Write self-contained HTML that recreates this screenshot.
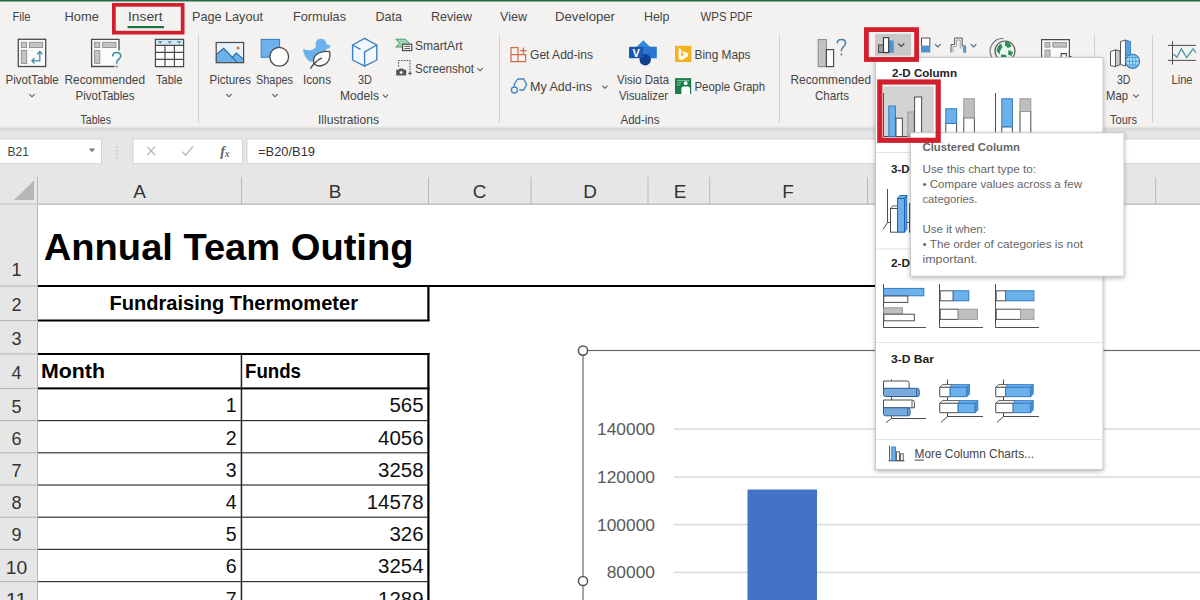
<!DOCTYPE html>
<html lang="en"><head><meta charset="utf-8"><title>Excel - Insert Clustered Column</title>
<style>
html,body{margin:0;padding:0;background:#fff;}
body{width:1200px;height:600px;overflow:hidden;font-family:'Liberation Sans', sans-serif;}
svg{display:block;}
svg text{font-family:'Liberation Sans', sans-serif;white-space:pre;}
</style></head><body>
<svg width="1200" height="600" viewBox="0 0 1200 600">
<defs><linearGradient id="rsh" x1="0" y1="0" x2="0" y2="1"><stop offset="0" stop-color="#f3f2f1"/><stop offset="0.35" stop-color="#d9d9d9"/><stop offset="1" stop-color="#e6e6e6"/></linearGradient><filter id="ds" x="-10%" y="-10%" width="120%" height="120%"><feDropShadow dx="0" dy="1.5" stdDeviation="2.2" flood-color="#000" flood-opacity="0.28"/></filter><clipPath id="page"><rect x="0" y="0" width="1200" height="600"/></clipPath></defs>
<rect x="0" y="0" width="1200" height="600" fill="#fff"/>
<g id="ribbon">
<rect x="0" y="0" width="1200" height="126.5" fill="#f3f2f1"/>
<rect x="0" y="0" width="1200" height="1.5" fill="#2b6a49"/>
<rect x="0" y="126" width="1200" height="7" fill="url(#rsh)"/>
<text x="12.5" y="21" font-size="13.1" textLength="18.0" lengthAdjust="spacingAndGlyphs" fill="#444">File</text>
<text x="64.5" y="21" font-size="13.1" textLength="34.3" lengthAdjust="spacingAndGlyphs" fill="#444">Home</text>
<text x="128" y="21" font-size="13.1" textLength="34.5" lengthAdjust="spacingAndGlyphs" fill="#444">Insert</text>
<text x="192" y="21" font-size="13.1" textLength="71" lengthAdjust="spacingAndGlyphs" fill="#444">Page Layout</text>
<text x="293" y="21" font-size="13.1" textLength="53" lengthAdjust="spacingAndGlyphs" fill="#444">Formulas</text>
<text x="375.5" y="21" font-size="13.1" textLength="26.5" lengthAdjust="spacingAndGlyphs" fill="#444">Data</text>
<text x="431" y="21" font-size="13.1" textLength="41" lengthAdjust="spacingAndGlyphs" fill="#444">Review</text>
<text x="500" y="21" font-size="13.1" textLength="27" lengthAdjust="spacingAndGlyphs" fill="#444">View</text>
<text x="555" y="21" font-size="13.1" textLength="60" lengthAdjust="spacingAndGlyphs" fill="#444">Developer</text>
<text x="644" y="21" font-size="13.1" textLength="25.5" lengthAdjust="spacingAndGlyphs" fill="#444">Help</text>
<text x="700.5" y="21" font-size="13.1" textLength="52.0" lengthAdjust="spacingAndGlyphs" fill="#444">WPS PDF</text>
<rect x="127.5" y="26" width="36.5" height="2.2" fill="#217346"/>
<rect x="113.85" y="4.85" width="68.8" height="27.8" fill="none" stroke="#d21f2e" stroke-width="3.7"/>
<rect x="198.0" y="35" width="1" height="88" fill="#d2d0ce"/>
<rect x="499.0" y="35" width="1" height="88" fill="#d2d0ce"/>
<rect x="779.0" y="35" width="1" height="88" fill="#d2d0ce"/>
<rect x="1094.0" y="35" width="1" height="88" fill="#d2d0ce"/>
<rect x="1152.0" y="35" width="1" height="88" fill="#d2d0ce"/>
<text x="5.5" y="84.3" font-size="12.2" textLength="53.3" lengthAdjust="spacingAndGlyphs" fill="#444">PivotTable</text>
<path d="M29.4 94.2L32 96.8L34.6 94.2" fill="none" stroke="#555" stroke-width="1.1"/>
<text x="64.5" y="84.3" font-size="12.2" textLength="80.5" lengthAdjust="spacingAndGlyphs" fill="#444">Recommended</text>
<text x="75.5" y="100.1" font-size="12.2" textLength="59.0" lengthAdjust="spacingAndGlyphs" fill="#444">PivotTables</text>
<text x="156" y="84.3" font-size="12.2" textLength="26.5" lengthAdjust="spacingAndGlyphs" fill="#444">Table</text>
<text x="80.5" y="123.9" font-size="12.2" textLength="30.5" lengthAdjust="spacingAndGlyphs" fill="#444">Tables</text>
<text x="209.5" y="84.3" font-size="12.2" textLength="41.5" lengthAdjust="spacingAndGlyphs" fill="#444">Pictures</text>
<path d="M226.4 94.2L229 96.8L231.6 94.2" fill="none" stroke="#555" stroke-width="1.1"/>
<text x="256" y="84.3" font-size="12.2" textLength="37" lengthAdjust="spacingAndGlyphs" fill="#444">Shapes</text>
<path d="M272.4 94.2L275 96.8L277.6 94.2" fill="none" stroke="#555" stroke-width="1.1"/>
<text x="303" y="84.3" font-size="12.2" textLength="28" lengthAdjust="spacingAndGlyphs" fill="#444">Icons</text>
<text x="358" y="84.3" font-size="12.2" textLength="14" lengthAdjust="spacingAndGlyphs" fill="#444">3D</text>
<text x="340" y="100.1" font-size="12.2" textLength="39" lengthAdjust="spacingAndGlyphs" fill="#444">Models</text>
<path d="M382.9 94.7L385.5 97.3L388.1 94.7" fill="none" stroke="#555" stroke-width="1.1"/>
<text x="415" y="50.3" font-size="12.2" textLength="47.5" lengthAdjust="spacingAndGlyphs" fill="#444">SmartArt</text>
<text x="415" y="73.3" font-size="12.2" textLength="59" lengthAdjust="spacingAndGlyphs" fill="#444">Screenshot</text>
<path d="M477.4 68.2L480 70.8L482.6 68.2" fill="none" stroke="#555" stroke-width="1.1"/>
<text x="318" y="123.9" font-size="12.2" textLength="61" lengthAdjust="spacingAndGlyphs" fill="#444">Illustrations</text>
<text x="530" y="59.3" font-size="12.2" textLength="63" lengthAdjust="spacingAndGlyphs" fill="#444">Get Add-ins</text>
<text x="530" y="91.3" font-size="12.2" textLength="62" lengthAdjust="spacingAndGlyphs" fill="#444">My Add-ins</text>
<path d="M602.4 85.7L605 88.3L607.6 85.7" fill="none" stroke="#555" stroke-width="1.1"/>
<text x="617" y="84.3" font-size="12.2" textLength="52" lengthAdjust="spacingAndGlyphs" fill="#444">Visio Data</text>
<text x="619" y="100.1" font-size="12.2" textLength="49" lengthAdjust="spacingAndGlyphs" fill="#444">Visualizer</text>
<text x="694.5" y="59.3" font-size="12.2" textLength="56.0" lengthAdjust="spacingAndGlyphs" fill="#444">Bing Maps</text>
<text x="694.5" y="91.3" font-size="12.2" textLength="70.5" lengthAdjust="spacingAndGlyphs" fill="#444">People Graph</text>
<text x="620.5" y="123.9" font-size="12.2" textLength="39.0" lengthAdjust="spacingAndGlyphs" fill="#444">Add-ins</text>
<text x="790.5" y="84.3" font-size="12.2" textLength="80.5" lengthAdjust="spacingAndGlyphs" fill="#444">Recommended</text>
<text x="815" y="100.1" font-size="12.2" textLength="34" lengthAdjust="spacingAndGlyphs" fill="#444">Charts</text>
<text x="1117" y="84.3" font-size="12.2" textLength="13.5" lengthAdjust="spacingAndGlyphs" fill="#444">3D</text>
<text x="1106" y="100.1" font-size="12.2" textLength="22" lengthAdjust="spacingAndGlyphs" fill="#444">Map</text>
<path d="M1133.4 94.7L1136 97.3L1138.6 94.7" fill="none" stroke="#555" stroke-width="1.1"/>
<text x="1110" y="123.9" font-size="12.2" textLength="27" lengthAdjust="spacingAndGlyphs" fill="#444">Tours</text>
<text x="1171.5" y="84.3" font-size="12.2" textLength="21.0" lengthAdjust="spacingAndGlyphs" fill="#444">Line</text>
</g>
<g id="formulabar">
<rect x="0" y="132.5" width="1200" height="72.5" fill="#e6e6e6"/>
<rect x="-1" y="139" width="102.5" height="24.7" fill="#fff" stroke="#d4d4d4" stroke-width="1"/>
<rect x="133" y="139" width="109.5" height="24.7" fill="#fff" stroke="#d4d4d4" stroke-width="1"/>
<rect x="247" y="139" width="960" height="24.7" fill="#fff" stroke="#d4d4d4" stroke-width="1"/>
<text x="7.5" y="156" font-size="12" textLength="21.5" lengthAdjust="spacingAndGlyphs" fill="#444">B21</text>
<path d="M88.8 148.6h6.4l-3.2 3.6z" fill="#777"/>
<rect x="116.5" y="146.5" width="1" height="1.4" fill="#aaa"/>
<rect x="116.5" y="150" width="1" height="1.4" fill="#aaa"/>
<rect x="116.5" y="153.5" width="1" height="1.4" fill="#aaa"/>
<rect x="116.5" y="157" width="1" height="1.4" fill="#aaa"/>
<path d="M147.3 146.6l7.6 8.4M154.9 146.6l-7.600 8.400" stroke="#b5b5b5" stroke-width="1.2" fill="none"/>
<path d="M182.200 151.600l3.400 3.600l7.400-8.800" stroke="#b5b5b5" stroke-width="1.3" fill="none"/>
<text x="220.3" y="155.8" font-size="14.5" fill="#666" style="font-family:'Liberation Serif',serif;font-style:italic;font-weight:bold">f</text>
<text x="224.8" y="156.8" font-size="9.5" fill="#666" style="font-family:'Liberation Serif',serif;font-style:italic;font-weight:bold">x</text>
<text x="258" y="156" font-size="12" textLength="57" lengthAdjust="spacingAndGlyphs" fill="#333">=B20/B19</text>
</g>
<g id="headers">
<rect x="37.0" y="177" width="1" height="27" fill="#b8b8b8"/>
<rect x="241.0" y="177" width="1" height="27" fill="#b8b8b8"/>
<rect x="428.0" y="177" width="1" height="27" fill="#b8b8b8"/>
<rect x="530.5" y="177" width="1" height="27" fill="#b8b8b8"/>
<rect x="647.5" y="177" width="1" height="27" fill="#b8b8b8"/>
<rect x="709.2" y="177" width="1" height="27" fill="#b8b8b8"/>
<rect x="867.0" y="177" width="1" height="27" fill="#b8b8b8"/>
<rect x="1155.2" y="177" width="1" height="27" fill="#b8b8b8"/>
<rect x="0" y="203.6" width="1200" height="1" fill="#b4b4b4"/>
<path d="M34 180.5V200H14z" fill="#b6b6b6"/>
<text x="139.5" y="198" font-size="18.9" fill="#333" text-anchor="middle">A</text>
<text x="335" y="198" font-size="18.9" fill="#333" text-anchor="middle">B</text>
<text x="479.7" y="198" font-size="18.9" fill="#333" text-anchor="middle">C</text>
<text x="590" y="198" font-size="18.9" fill="#333" text-anchor="middle">D</text>
<text x="680" y="198" font-size="18.9" fill="#333" text-anchor="middle">E</text>
<text x="788" y="198" font-size="18.9" fill="#333" text-anchor="middle">F</text>
<rect x="0" y="204.6" width="37" height="396" fill="#e6e6e6"/>
<rect x="37" y="204.6" width="1" height="396" fill="#b4b4b4"/>
</g>
<g id="sheet">
<rect x="0" y="285.5" width="37" height="1" fill="#b4b4b4"/>
<rect x="0" y="320.0" width="37" height="1" fill="#b4b4b4"/>
<rect x="0" y="353.5" width="37" height="1" fill="#b4b4b4"/>
<rect x="0" y="387.9" width="37" height="1" fill="#b4b4b4"/>
<rect x="0" y="420.1" width="37" height="1" fill="#b4b4b4"/>
<rect x="0" y="452.3" width="37" height="1" fill="#b4b4b4"/>
<rect x="0" y="484.5" width="37" height="1" fill="#b4b4b4"/>
<rect x="0" y="516.7" width="37" height="1" fill="#b4b4b4"/>
<rect x="0" y="548.9" width="37" height="1" fill="#b4b4b4"/>
<rect x="0" y="581.1" width="37" height="1" fill="#b4b4b4"/>
<rect x="0" y="613.3" width="37" height="1" fill="#b4b4b4"/>
<text x="16.4" y="276" font-size="18" fill="#333" text-anchor="middle">1</text>
<text x="16.4" y="310.5" font-size="18" fill="#333" text-anchor="middle">2</text>
<text x="16.4" y="345" font-size="18" fill="#333" text-anchor="middle">3</text>
<text x="16.4" y="378.5" font-size="18" fill="#333" text-anchor="middle">4</text>
<text x="16.4" y="412.6" font-size="18" fill="#333" text-anchor="middle">5</text>
<text x="16.4" y="444.8" font-size="18" fill="#333" text-anchor="middle">6</text>
<text x="16.4" y="477.0" font-size="18" fill="#333" text-anchor="middle">7</text>
<text x="16.4" y="509.2" font-size="18" fill="#333" text-anchor="middle">8</text>
<text x="16.4" y="541.4" font-size="18" fill="#333" text-anchor="middle">9</text>
<text x="16.4" y="573.6" font-size="18" textLength="21.5" lengthAdjust="spacingAndGlyphs" fill="#333" text-anchor="middle">10</text>
<text x="16.4" y="605.8" font-size="18" textLength="21.5" lengthAdjust="spacingAndGlyphs" fill="#333" text-anchor="middle">11</text>
<rect x="38" y="285" width="838" height="2" fill="#000"/>
<rect x="38" y="319.5" width="391.5" height="2" fill="#000"/>
<rect x="38" y="353" width="391.5" height="2" fill="#000"/>
<rect x="38" y="387.4" width="391.5" height="2" fill="#000"/>
<rect x="427.3" y="286" width="2.2" height="35" fill="#000"/>
<rect x="427.3" y="353" width="2.2" height="250" fill="#000"/>
<rect x="240.7" y="354" width="1.5" height="250" fill="#222"/>
<rect x="38" y="420.0" width="390" height="1.2" fill="#333"/>
<rect x="38" y="452.2" width="390" height="1.2" fill="#333"/>
<rect x="38" y="484.4" width="390" height="1.2" fill="#333"/>
<rect x="38" y="516.6" width="390" height="1.2" fill="#333"/>
<rect x="38" y="548.8" width="390" height="1.2" fill="#333"/>
<rect x="38" y="581.0" width="390" height="1.2" fill="#333"/>
<rect x="38" y="613.2" width="390" height="1.2" fill="#333"/>
<text x="43.8" y="259.5" font-size="37.6" textLength="369.7" lengthAdjust="spacingAndGlyphs" font-weight="bold" fill="#000">Annual Team Outing</text>
<text x="109.5" y="310" font-size="19.8" textLength="248.5" lengthAdjust="spacingAndGlyphs" font-weight="bold" fill="#000">Fundraising Thermometer</text>
<text x="41" y="378" font-size="19.8" textLength="64" lengthAdjust="spacingAndGlyphs" font-weight="bold" fill="#000">Month</text>
<text x="245" y="378" font-size="19.8" textLength="56" lengthAdjust="spacingAndGlyphs" font-weight="bold" fill="#000">Funds</text>
<text x="236.5" y="412.4" font-size="19.5" fill="#111" text-anchor="end">1</text>
<text x="423.6" y="412.4" font-size="19.5" textLength="34.1" lengthAdjust="spacingAndGlyphs" fill="#111" text-anchor="end">565</text>
<text x="236.5" y="444.6" font-size="19.5" fill="#111" text-anchor="end">2</text>
<text x="423.6" y="444.6" font-size="19.5" textLength="45.5" lengthAdjust="spacingAndGlyphs" fill="#111" text-anchor="end">4056</text>
<text x="236.5" y="476.8" font-size="19.5" fill="#111" text-anchor="end">3</text>
<text x="423.6" y="476.8" font-size="19.5" textLength="45.5" lengthAdjust="spacingAndGlyphs" fill="#111" text-anchor="end">3258</text>
<text x="236.5" y="509.0" font-size="19.5" fill="#111" text-anchor="end">4</text>
<text x="423.6" y="509.0" font-size="19.5" textLength="56.9" lengthAdjust="spacingAndGlyphs" fill="#111" text-anchor="end">14578</text>
<text x="236.5" y="541.2" font-size="19.5" fill="#111" text-anchor="end">5</text>
<text x="423.6" y="541.2" font-size="19.5" textLength="34.1" lengthAdjust="spacingAndGlyphs" fill="#111" text-anchor="end">326</text>
<text x="236.5" y="573.4" font-size="19.5" fill="#111" text-anchor="end">6</text>
<text x="423.6" y="573.4" font-size="19.5" textLength="45.5" lengthAdjust="spacingAndGlyphs" fill="#111" text-anchor="end">3254</text>
<text x="236.5" y="605.6" font-size="19.5" fill="#111" text-anchor="end">7</text>
<text x="423.6" y="605.6" font-size="19.5" textLength="45.5" lengthAdjust="spacingAndGlyphs" fill="#111" text-anchor="end">1289</text>
</g>
<g id="chart">
<rect x="583" y="350.5" width="640" height="300" fill="#fff" stroke="#6a6a6a" stroke-width="1.2"/>
<rect x="674" y="428.25" width="526" height="1.5" fill="#d9d9d9"/>
<text x="655" y="435" font-size="16.6" textLength="58" lengthAdjust="spacingAndGlyphs" fill="#595959" text-anchor="end">140000</text>
<rect x="674" y="476.25" width="526" height="1.5" fill="#d9d9d9"/>
<text x="655" y="483" font-size="16.6" textLength="58" lengthAdjust="spacingAndGlyphs" fill="#595959" text-anchor="end">120000</text>
<rect x="674" y="523.85" width="526" height="1.5" fill="#d9d9d9"/>
<text x="655" y="530.6" font-size="16.6" textLength="58" lengthAdjust="spacingAndGlyphs" fill="#595959" text-anchor="end">100000</text>
<rect x="674" y="571.65" width="526" height="1.5" fill="#d9d9d9"/>
<text x="655" y="578.4" font-size="16.6" textLength="48.3" lengthAdjust="spacingAndGlyphs" fill="#595959" text-anchor="end">80000</text>
<rect x="747.5" y="489.5" width="69.5" height="111" fill="#4472c4"/>
<circle cx="583" cy="350.6" r="4.6" fill="#fff" stroke="#555" stroke-width="1.5"/>
<circle cx="583" cy="581" r="4.6" fill="#fff" stroke="#555" stroke-width="1.5"/>
</g>
<g id="icons">
<rect x="18.3" y="39.3" width="27.4" height="27.2" fill="#fbfbfb" stroke="#4a4a4a" stroke-width="1.3"/>
<rect x="21.3" y="42.3" width="5.4" height="5.2" fill="#c3c3c3" stroke="#8e8e8e" stroke-width="0.9"/>
<rect x="29.4" y="42.3" width="13.3" height="5.2" fill="#c3c3c3" stroke="#8e8e8e" stroke-width="0.9"/>
<rect x="21.3" y="50.4" width="5.4" height="13" fill="#c3c3c3" stroke="#8e8e8e" stroke-width="0.9"/>
<path d="M32 60.8H39.8V51.6M34.6 58.2l-2.7 2.6l2.7 2.6M37.2 54.2l2.6-2.7l2.6 2.7" fill="none" stroke="#3a8fa8" stroke-width="1.3"/>
<path d="M114.5 66.5H91.6V39.3H119V50.5" fill="#fbfbfb" stroke="#4a4a4a" stroke-width="1.3"/>
<rect x="94.6" y="42.3" width="5.2" height="5.2" fill="#c3c3c3" stroke="#8e8e8e" stroke-width="0.9"/>
<rect x="102.6" y="42.3" width="13.3" height="5.2" fill="#c3c3c3" stroke="#8e8e8e" stroke-width="0.9"/>
<rect x="94.6" y="50.4" width="5.2" height="13" fill="#c3c3c3" stroke="#8e8e8e" stroke-width="0.9"/>
<path d="M112.6 56.4c0-2.6 1.8-3.9 4.1-3.9s4 1.4 4 3.6c0 1.8-1 2.7-2.2 3.6c-1.3 1-1.9 1.8-1.9 3.5v.6" fill="none" stroke="#3a8fa8" stroke-width="1.5"/>
<circle cx="116.6" cy="66.6" r="1.05" fill="#3a8fa8"/>
<rect x="155.4" y="39.4" width="28.2" height="6" fill="#d6e8f5"/>
<rect x="155.4" y="45.4" width="28.2" height="21.2" fill="#fcfcfc"/>
<path d="M155.4 39.4H183.6V66.6H155.4zM155.4 45.4H183.6M155.4 52.4H183.6M155.4 59.4H183.6M165 45.4V66.6M174.4 45.4V66.6" fill="none" stroke="#4a4a4a" stroke-width="1.2"/>
<path d="M158.0 41.3h4.4l-2.2 2.5z" fill="#3a8fa8"/>
<path d="M167.5 41.3h4.4l-2.2 2.5z" fill="#3a8fa8"/>
<path d="M176.8 41.3h4.4l-2.2 2.5z" fill="#3a8fa8"/>
<rect x="216.2" y="42.5" width="27.4" height="20.2" fill="#eaf2f9"/>
<path d="M216.2 54.5l7.5-6.2l13.8 14.4H216.2z" fill="#6db1ea"/>
<path d="M231.4 58.2l5-5.2l7.2 6.6v3.1H236z" fill="#6db1ea"/>
<path d="M216.2 54.5l7.5-6.2l13.8 14.4M231.6 58l4.8-5l7.2 6.6" fill="none" stroke="#2c6aa8" stroke-width="1.1"/>
<circle cx="238" cy="48" r="1.6" fill="#c77b2e"/>
<rect x="216.2" y="42.5" width="27.4" height="20.2" fill="none" stroke="#4a4a4a" stroke-width="1.2"/>
<rect x="261.2" y="39.4" width="18.4" height="17.8" fill="#6db1ea" stroke="#2e7cc7" stroke-width="1"/>
<circle cx="279.2" cy="56.8" r="9.4" fill="#fdfdfd" stroke="#4a4a4a" stroke-width="1.3"/>
<path transform="translate(0 1.6)" d="M303.2 47.2c2.6 1.6 6.2 2 9.6.6c1.6-.7 2.6-1.7 3.2-2.6a5.6 5.6 0 1 1 10.6-2.6l3.9 1.2c-.4 2-2 3.4-4.2 3.6c-.6 3.6-2.6 6-5.6 8.200c-3.600 2.400-6.600 3.400-9.600 4.900c-4.400-2-7.900-7-7.900-13.300z" fill="#6db1ea"/>
<path d="M329.600 51.600c1.400 6.200-1 11.600-6.400 13.600c-3.800 1.400-7.600.4-9.400-1.800c-1.400-6 2.600-10.600 8.400-11.600c2.600-.5 5.200-.4 7.400-.2z" fill="#fbfbfb" stroke="#4a4a4a" stroke-width="1.3"/>
<path d="M310.400 68.600c2.600-4.400 6.400-8.200 11.400-10.800" fill="none" stroke="#4a4a4a" stroke-width="1.4"/>
<path d="M364.600 38.400L376.800 45V60L364.600 66.200L352.600 60V45z" fill="#f2f8fd" stroke="#3d7fbf" stroke-width="1.4" stroke-linejoin="round"/>
<path d="M352.600 45L360.500 49.400M364.600 66.200V52L376.800 45" fill="none" stroke="#3d7fbf" stroke-width="1.400"/>
<path d="M395.800 39.200h9.600l3.800 3.900l-3.800 3.900h-9.600l3.800-3.900z" fill="#9fd6b6" stroke="#3f9b68" stroke-width="1"/>
<rect x="402.600" y="44.200" width="9.200" height="6.400" fill="#f3f2f1" stroke="#4a4a4a" stroke-width="1.200"/>
<path d="M404.600 46.400h5.400M404.600 48.500h5.400" stroke="#4a4a4a" stroke-width="0.900" fill="none"/>
<path d="M398.600 66.500V60.600H410V72.600" fill="none" stroke="#4a4a4a" stroke-width="1" stroke-dasharray="1.600 1.200"/>
<path d="M396.200 69.800h2.300l.9-1.300h3.600l.9 1.300h2.300v5.700h-10z" fill="#555"/>
<circle cx="401.200" cy="72.500" r="1.700" fill="#f3f2f1" stroke="#555" stroke-width="0.500"/>
<path d="M408.200 73.400h3.600M410 71.600v3.600" stroke="#4a4a4a" stroke-width="0.900" fill="none"/>
<path d="M511 47.600h7v7h-7zM511 54.600h7v7h-7zM518 54.600h7.600v7H518z" fill="#fbf3ef" stroke="#d4694a" stroke-width="1.200"/>
<path d="M520.200 50.600h6.400M523.400 47.400v6.400" stroke="#d4694a" stroke-width="1.200" fill="none"/>
<path d="M517.600 79h6l3.100 5.400l-3.100 5.600h-4.400M514.600 86.400l-.4-2l3.400-5.400" fill="none" stroke="#3f86c8" stroke-width="1.300"/>
<circle cx="514.400" cy="90" r="3" fill="#f3f2f1" stroke="#3f86c8" stroke-width="1.300"/>
<path d="M643.300 40.200l6.600 6.500l-6.600 6.500l-6.600-6.500z" fill="#2f8de0"/>
<rect x="641" y="46.700" width="15.800" height="11.600" fill="#2a76d2"/>
<circle cx="645.200" cy="59.800" r="5.700" fill="#123f8f"/>
<rect x="629" y="46.700" width="14.300" height="11.600" rx="1" fill="#1d56b0"/>
<text x="636.2" y="56.6" font-size="11" font-weight="bold" fill="#fff" text-anchor="middle">V</text>
<rect x="675" y="45.800" width="16.400" height="16.200" fill="#f2b31e"/>
<path d="M678.600 48.200l2.700 1v7.400l3.600-2l-1.900-.9l-1.100-2.700l6.200 2.200v3.100l-6.800 3.900l-2.700-1.500z" fill="#fffaf0"/>
<rect x="675" y="78.100" width="16.200" height="15.900" fill="#1f7e50"/>
<path d="M677 80.600h12M677 82.800h4M677 85h3" stroke="#7fc6a0" stroke-width="1" fill="none"/>
<circle cx="685.700" cy="83.200" r="1.900" fill="#fff"/>
<path d="M681.400 94v-5.200q0-2.400 2.400-2.400h3.800q2.400 0 2.400 2.400V94z" fill="#fff"/>
<rect x="818.200" y="39.600" width="8.200" height="27" fill="#c3c3c3" stroke="#8e8e8e" stroke-width="1.100"/>
<rect x="826.400" y="49.600" width="7.200" height="17" fill="#fbfbfb" stroke="#4a4a4a" stroke-width="1.200"/>
<path d="M837.200 43.600c0-2.600 1.800-4 4.200-4s4.200 1.500 4.200 3.700c0 1.800-1 2.700-2.300 3.700c-1.300 1-1.900 1.800-1.900 3.500v.8" fill="none" stroke="#4380b2" stroke-width="1.500"/>
<circle cx="841.400" cy="54.500" r="1.050" fill="#4380b2"/>
<circle cx="1005" cy="51" r="10" fill="#e9f6ee" stroke="#555" stroke-width="1.200"/>
<path d="M992 57.500A12.500 12.500 0 0 1 1003.500 38.500" fill="none" stroke="#6b6b6b" stroke-width="1.100"/>
<path d="M998 46l3-2.500l1.500 3.500l-2 3l-1 4.500l-3-3.500zM1005 41.500l4.500 1l2 4l-3.500 1.500l-3-2.500zM1008.500 50l4.500 2l-1.500 4l-3.500-1.500zM1001 54.500l5 .5l1 3l-6 .5z" fill="#2f8d57"/>
<path d="M1041.600 60V39.600H1069.400V56.500H1071.500" fill="#fbfbfb" stroke="#4a4a4a" stroke-width="1.100"/>
<rect x="1045" y="42.6" width="5" height="4.5" fill="#c3c3c3" stroke="#8e8e8e" stroke-width="0.900"/>
<rect x="1052.8" y="42.6" width="13.6" height="4.5" fill="#c3c3c3" stroke="#8e8e8e" stroke-width="0.900"/>
<rect x="1045" y="50" width="5" height="10" fill="#c3c3c3" stroke="#8e8e8e" stroke-width="0.900"/>
<path d="M1061.200 60V53.600h5.200V56.500" fill="#fbfbfb" stroke="#4a4a4a" stroke-width="1.100"/>
<path d="M1110.500 51.600l5-1.800v16.800l-5-1z" fill="#fbfbfb" stroke="#555" stroke-width="1"/>
<path d="M1115.500 49.800l4.600 1.200v13.600l-4.600 2z" fill="#c9c9c9" stroke="#555" stroke-width="1"/>
<path d="M1120.500 41.600l5-1.600v26l-5-1.400z" fill="#fbfbfb" stroke="#555" stroke-width="1"/>
<path d="M1125.500 40l5 1.600v14h-5z" fill="#5a9fe0" stroke="#2e75b6" stroke-width="0.800"/>
<circle cx="1132.600" cy="61.300" r="7" fill="#a5e0f7" stroke="#2e75b6" stroke-width="1.100"/>
<path d="M1125.600 61.300h14M1132.600 54.300v14M1126.600 57.600h12M1126.600 65h12" stroke="#3a86c8" stroke-width="0.700" fill="none"/>
<ellipse cx="1132.600" cy="61.300" rx="3.300" ry="7" fill="none" stroke="#3a86c8" stroke-width="0.700"/>
<path d="M1172.500 41.200V64.600M1168 45.400H1196M1168 60.400H1196" stroke="#505050" stroke-width="1" fill="none"/>
<path d="M1173.400 54.200L1177 57.200L1181.300 48.800L1186.700 57.600L1193 48.800L1196 52.600" stroke="#4a96a8" stroke-width="1.300" fill="none"/>
</g>
<g id="chartbtns">
<rect x="875" y="33.8" width="36" height="21.8" fill="#c9c9c9"/>
<rect x="878.5" y="45" width="5" height="7.5" fill="#9d9d9d" stroke="#4d4d4d" stroke-width="1"/>
<rect x="888.6" y="40.8" width="4.8" height="11.7" fill="#4f94d4" stroke="#4f94d4" stroke-width="0.6"/>
<rect x="883.5" y="37.7" width="5.2" height="14.8" fill="#fff" stroke="#333" stroke-width="1.1"/>
<path d="M898.3 43.5L901.3 46.5L904.3 43.5" fill="none" stroke="#444" stroke-width="1.2"/>
<rect x="921.5" y="38" width="8.3" height="8.2" fill="#fff" stroke="#555" stroke-width="1"/>
<rect x="921" y="46.2" width="9.3" height="6.3" fill="#4f94d4" stroke="none" stroke-width="0"/>
<path d="M935.0 44.1L937.8 46.9L940.5999999999999 44.1" fill="none" stroke="#4b6c8c" stroke-width="1.2"/>
<path d="M951 52.5V44.5h3.6V38h7.6v8h3.4v6.5" fill="none" stroke="#555" stroke-width="1"/>
<path d="M953 52.5V46.5h3.6V40h3.6v8h3.4v4.5" fill="none" stroke="#999" stroke-width="0.9"/>
<rect x="963.4" y="46.4" width="2.6" height="6.2" fill="#4f94d4"/>
<path d="M970.8000000000001 44.1L973.6 46.9L976.4 44.1" fill="none" stroke="#4b6c8c" stroke-width="1.2"/>
</g>
<g id="dropdown">
<rect x="875.5" y="57.5" width="227.5" height="412" fill="#fff" stroke="#c8c8c8" stroke-width="1" filter="url(#ds)"/>
<rect x="876" y="152.0" width="226.5" height="1" fill="#e4e4e4"/>
<rect x="876" y="248.5" width="226.5" height="1" fill="#e4e4e4"/>
<rect x="876" y="342.0" width="226.5" height="1" fill="#e4e4e4"/>
<rect x="876" y="439.0" width="226.5" height="1" fill="#e4e4e4"/>
<text x="892" y="76.6" font-size="11.7" textLength="65" lengthAdjust="spacingAndGlyphs" font-weight="bold" fill="#222">2-D Column</text>
<text x="891" y="172.5" font-size="11.7" textLength="65" lengthAdjust="spacingAndGlyphs" font-weight="bold" fill="#222">3-D Column</text>
<text x="891" y="267" font-size="11.7" textLength="42" lengthAdjust="spacingAndGlyphs" font-weight="bold" fill="#222">2-D Bar</text>
<text x="891" y="363" font-size="11.7" textLength="43" lengthAdjust="spacingAndGlyphs" font-weight="bold" fill="#222">3-D Bar</text>
<rect x="883.2" y="86.2" width="50.6" height="51" fill="#d3d3d3"/>
<path d="M883.5 93L883.5 137" stroke="#4d4d4d" stroke-width="1" fill="none"/>
<path d="M883 136.5L926 136.5" stroke="#4d4d4d" stroke-width="1" fill="none"/>
<rect x="888.8" y="106" width="6.6" height="30.5" fill="#6db1ea" stroke="#2e7cc7" stroke-width="1"/>
<rect x="896" y="118.2" width="6.4" height="18.3" fill="#fff" stroke="#4d4d4d" stroke-width="1"/>
<rect x="907.8" y="112" width="6.2" height="24.5" fill="#bfbfbf" stroke="#9a9a9a" stroke-width="1"/>
<rect x="914.6" y="97" width="7" height="39.5" fill="#fff" stroke="#4d4d4d" stroke-width="1"/>
<path d="M939.5 93L939.5 137" stroke="#4d4d4d" stroke-width="1" fill="none"/>
<path d="M939 136.5L983 136.5" stroke="#4d4d4d" stroke-width="1" fill="none"/>
<rect x="945.8" y="123.5" width="10.8" height="13" fill="#fff" stroke="#4d4d4d" stroke-width="1"/>
<rect x="945.8" y="108.8" width="10.8" height="14.7" fill="#6db1ea" stroke="#2e7cc7" stroke-width="1"/>
<rect x="963.8" y="117.8" width="10.6" height="18.7" fill="#fff" stroke="#4d4d4d" stroke-width="1"/>
<rect x="963.8" y="98.8" width="10.6" height="19" fill="#bfbfbf" stroke="#9a9a9a" stroke-width="1"/>
<path d="M995.5 93L995.5 137" stroke="#4d4d4d" stroke-width="1" fill="none"/>
<path d="M995 136.5L1039 136.5" stroke="#4d4d4d" stroke-width="1" fill="none"/>
<rect x="1001.8" y="126.8" width="10.6" height="9.7" fill="#fff" stroke="#4d4d4d" stroke-width="1"/>
<rect x="1001.8" y="98.8" width="10.6" height="28" fill="#6db1ea" stroke="#2e7cc7" stroke-width="1"/>
<rect x="1020" y="111.5" width="10.8" height="25" fill="#fff" stroke="#4d4d4d" stroke-width="1"/>
<rect x="1020" y="98.8" width="10.8" height="12.7" fill="#bfbfbf" stroke="#9a9a9a" stroke-width="1"/>
<path d="M887.5 189V222.5L883.2 229.2M887.5 222.5H890.5M906.8 222.5H910.5M909.5 203V232.5" fill="none" stroke="#4d4d4d" stroke-width="1"/>
<path d="M890.5 208.5l2-2.6h5v2.6z" fill="#fff" stroke="#4d4d4d" stroke-width="0.9"/>
<rect x="890.5" y="208.5" width="7" height="23.7" fill="#fff" stroke="#4d4d4d" stroke-width="1"/>
<path d="M904.5 198.5l2.3-3v33.7l-2.3 3z" fill="#5a9fe0" stroke="#1f62ad" stroke-width="0.9"/>
<path d="M897.5 198.5l2.3-3h7l-2.3 3z" fill="#6db1ea" stroke="#1f62ad" stroke-width="0.9"/>
<rect x="897.5" y="198.5" width="7" height="33.7" fill="#6db1ea" stroke="#1f62ad" stroke-width="1"/>
<path d="M883.5 284V327.5H926" fill="none" stroke="#4d4d4d" stroke-width="1"/>
<rect x="883.8" y="288.4" width="40" height="7.4" fill="#6db1ea" stroke="#2e7cc7" stroke-width="1"/>
<rect x="883.8" y="296" width="24" height="6.4" fill="#fff" stroke="#4d4d4d" stroke-width="1"/>
<rect x="883.8" y="307.8" width="18.6" height="6.2" fill="#bfbfbf" stroke="#9a9a9a" stroke-width="1"/>
<rect x="883.8" y="314.2" width="30.5" height="6.6" fill="#fff" stroke="#4d4d4d" stroke-width="1"/>
<path d="M939.5 284V327.5H983" fill="none" stroke="#4d4d4d" stroke-width="1"/>
<rect x="940.2" y="290.8" width="13" height="10" fill="#fff" stroke="#4d4d4d" stroke-width="1"/>
<rect x="953.2" y="290.8" width="15.6" height="10" fill="#6db1ea" stroke="#2e7cc7" stroke-width="1"/>
<rect x="940.2" y="309.2" width="18" height="10.2" fill="#fff" stroke="#4d4d4d" stroke-width="1"/>
<rect x="958.2" y="309.2" width="19.2" height="10.2" fill="#bfbfbf" stroke="#9a9a9a" stroke-width="1"/>
<path d="M995.5 284V327.5H1039" fill="none" stroke="#4d4d4d" stroke-width="1"/>
<rect x="996.2" y="290.8" width="9.5" height="10" fill="#fff" stroke="#4d4d4d" stroke-width="1"/>
<rect x="1005.7" y="290.8" width="28.2" height="10" fill="#6db1ea" stroke="#2e7cc7" stroke-width="1"/>
<rect x="996.2" y="309.2" width="24.3" height="10.2" fill="#fff" stroke="#4d4d4d" stroke-width="1"/>
<rect x="1020.5" y="309.2" width="13.4" height="10.2" fill="#bfbfbf" stroke="#9a9a9a" stroke-width="1"/>
<path d="M891.5 379.5V418.5H926M891.5 418.5l-5.5 4" fill="none" stroke="#4d4d4d" stroke-width="1"/>
<path d="M883.5 381h23.5q2.2 0 2.2 2.4v5.2h-25.7z" fill="#fff" stroke="#4d4d4d" stroke-width="1"/>
<path d="M883.5 388.3h33.3q2.4 0 2.4 2.4v4.2q0 1.6-1.8 1.6h-31.6q-2.3 0-2.3-2z" fill="#7aa9dc" stroke="#2a5f9e" stroke-width="1"/>
<path d="M916.6 388.6v7.4" stroke="#2a5f9e" stroke-width="0.9" fill="none"/>
<path d="M883.5 400h28.5q2.4 0 2.4 2.4v5.4h-30.9z" fill="#fff" stroke="#4d4d4d" stroke-width="1"/>
<path d="M912 400.3v7.4" stroke="#4d4d4d" stroke-width="0.9" fill="none"/>
<path d="M883.5 407.8h24.4q2.2 0 2.2 2.2v4q0 1.8-1.8 1.8h-22.6q-2.2 0-2.2-2z" fill="#7aa9dc" stroke="#2a5f9e" stroke-width="1"/>
<path d="M907.6 408v7.6" stroke="#2a5f9e" stroke-width="0.9" fill="none"/>
<path d="M947.5 379.5V416.5H983M947.5 416.5l-6.5 5.8" fill="none" stroke="#4d4d4d" stroke-width="1"/>
<path d="M939.8 387.20000000000005h10.4v9.5h-10.4z" fill="#fff" stroke="#4d4d4d" stroke-width="1"/>
<path d="M939.8 387.20000000000005l2.6 -2.6h10.4l-2.6 2.6z" fill="#fff" stroke="#4d4d4d" stroke-width="0.9"/>
<path d="M950.1999999999999 387.20000000000005h16.6v9.5h-16.6z" fill="#6db1ea" stroke="#2e7cc7" stroke-width="1"/>
<path d="M950.1999999999999 387.20000000000005l2.6 -2.6h16.6l-2.6 2.6z" fill="#6db1ea" stroke="#2e7cc7" stroke-width="0.9"/>
<path d="M966.8 387.20000000000005l2.6 -2.6v9.5l-2.6 2.6z" fill="#4d93d6" stroke="#2e7cc7" stroke-width="0.9"/>
<path d="M939.8 403.20000000000005h18.4v9.5h-18.4z" fill="#fff" stroke="#4d4d4d" stroke-width="1"/>
<path d="M939.8 403.20000000000005l2.6 -2.6h18.4l-2.6 2.6z" fill="#fff" stroke="#4d4d4d" stroke-width="0.9"/>
<path d="M958.1999999999999 403.20000000000005h17v9.5h-17z" fill="#6db1ea" stroke="#2e7cc7" stroke-width="1"/>
<path d="M958.1999999999999 403.20000000000005l2.6 -2.6h17l-2.6 2.6z" fill="#6db1ea" stroke="#2e7cc7" stroke-width="0.9"/>
<path d="M975.1999999999999 403.20000000000005l2.6 -2.6v9.5l-2.6 2.6z" fill="#4d93d6" stroke="#2e7cc7" stroke-width="0.9"/>
<path d="M1003.5 379.5V416.5H1039M1003.5 416.5l-6.5 5.8" fill="none" stroke="#4d4d4d" stroke-width="1"/>
<path d="M995.8 387.20000000000005h9.8v9.5h-9.8z" fill="#fff" stroke="#4d4d4d" stroke-width="1"/>
<path d="M995.8 387.20000000000005l2.6 -2.6h9.8l-2.6 2.6z" fill="#fff" stroke="#4d4d4d" stroke-width="0.9"/>
<path d="M1005.5999999999999 387.20000000000005h25v9.5h-25z" fill="#6db1ea" stroke="#2e7cc7" stroke-width="1"/>
<path d="M1005.5999999999999 387.20000000000005l2.6 -2.6h25l-2.6 2.6z" fill="#6db1ea" stroke="#2e7cc7" stroke-width="0.9"/>
<path d="M1030.6 387.20000000000005l2.6 -2.6v9.5l-2.6 2.6z" fill="#4d93d6" stroke="#2e7cc7" stroke-width="0.9"/>
<path d="M995.8 403.20000000000005h17.4v9.5h-17.4z" fill="#fff" stroke="#4d4d4d" stroke-width="1"/>
<path d="M995.8 403.20000000000005l2.6 -2.6h17.4l-2.6 2.6z" fill="#fff" stroke="#4d4d4d" stroke-width="0.9"/>
<path d="M1013.1999999999999 403.20000000000005h17.4v9.5h-17.4z" fill="#6db1ea" stroke="#2e7cc7" stroke-width="1"/>
<path d="M1013.1999999999999 403.20000000000005l2.6 -2.6h17.4l-2.6 2.6z" fill="#6db1ea" stroke="#2e7cc7" stroke-width="0.9"/>
<path d="M1030.6 403.20000000000005l2.6 -2.6v9.5l-2.6 2.6z" fill="#4d93d6" stroke="#2e7cc7" stroke-width="0.9"/>
<path d="M889.6 445.5V460.8M888.5 460.8H904.5" stroke="#4d4d4d" stroke-width="1" fill="none"/>
<rect x="891.8" y="447" width="3.6" height="13.6" fill="#6db1ea" stroke="#2e7cc7" stroke-width="0.9"/>
<rect x="896.4" y="451.8" width="3" height="8.8" fill="#fff" stroke="#4d4d4d" stroke-width="0.9"/>
<rect x="900.4" y="453.8" width="2.8" height="6.8" fill="#fff" stroke="#4d4d4d" stroke-width="0.9"/>
<text x="914.5" y="458" font-size="12.2" textLength="119.5" lengthAdjust="spacingAndGlyphs" fill="#444">More Column Charts...</text>
<rect x="914.5" y="459.6" width="9.4" height="1" fill="#444"/>
</g>
<g id="tooltip">
<rect x="910.5" y="132.8" width="213.5" height="143.4" fill="#fff" stroke="#c9c9c9" stroke-width="1" filter="url(#ds)"/>
<text x="922.5" y="150.8" font-size="11.8" textLength="97.5" lengthAdjust="spacingAndGlyphs" font-weight="bold" fill="#666">Clustered Column</text>
<text x="922.5" y="172.5" font-size="11.8" textLength="113.5" lengthAdjust="spacingAndGlyphs" fill="#666">Use this chart type to:</text>
<text x="922.5" y="187.5" font-size="11.8" textLength="159.5" lengthAdjust="spacingAndGlyphs" fill="#666">• Compare values across a few</text>
<text x="922.5" y="202.5" font-size="11.8" textLength="55.0" lengthAdjust="spacingAndGlyphs" fill="#666">categories.</text>
<text x="922.5" y="232.5" font-size="11.8" textLength="63.5" lengthAdjust="spacingAndGlyphs" fill="#666">Use it when:</text>
<text x="922.5" y="247.5" font-size="11.8" textLength="160.5" lengthAdjust="spacingAndGlyphs" fill="#666">• The order of categories is not</text>
<text x="922.5" y="262.5" font-size="11.8" textLength="55.0" lengthAdjust="spacingAndGlyphs" fill="#666">important.</text>
</g>
<g id="annot">
<rect x="866.4" y="29.6" width="50.2" height="29.9" fill="none" stroke="#d21f2e" stroke-width="4.8"/>
<rect x="879.8" y="82" width="58.4" height="58.3" fill="none" stroke="#d21f2e" stroke-width="5.2"/>
</g>
</svg>
</body></html>
